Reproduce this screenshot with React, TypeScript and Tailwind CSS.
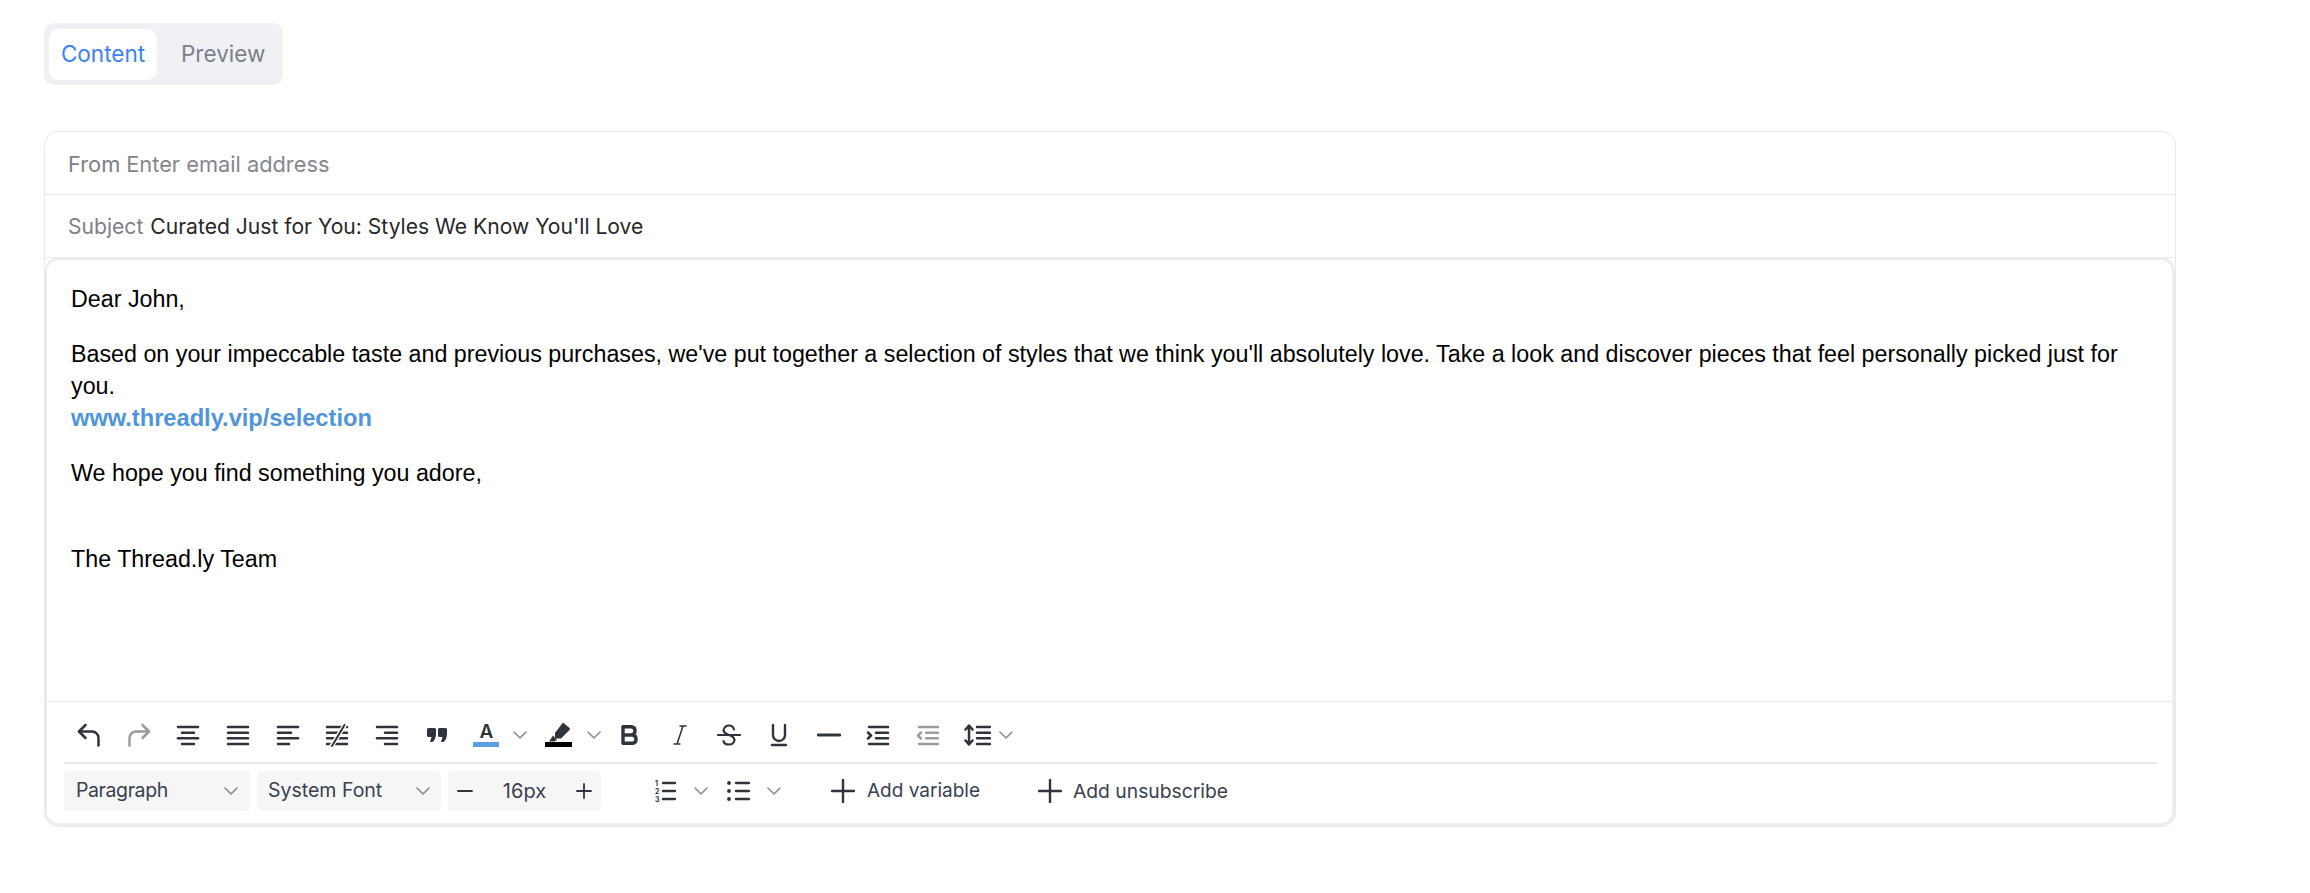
import React from 'react';

const sans = { fontFamily: 'Inter, sans-serif' };

const Icon: React.FC<{ children: React.ReactNode; className?: string; stroke?: number }> = ({ children, className, stroke }) => (
  <svg
    viewBox="0 0 24 24"
    fill="none"
    stroke="currentColor"
    strokeWidth={stroke || 2.5}
    strokeLinecap="round"
    strokeLinejoin="round"
    className={`w-[24px] h-[24px] ${className || ''}`}
  >
    {children}
  </svg>
);

const rowY = [4, 9.7, 15.3, 21];

const Lines: React.FC<{ rows: [number, number][] }> = ({ rows }) => (
  <Icon>
    {rows.map(([a, b], i) => (
      <path key={i} d={`M${a} ${rowY[i]}H${b}`} />
    ))}
  </Icon>
);

const Chevron: React.FC<{ className?: string }> = ({ className }) => (
  <div className={`flex items-center justify-center w-[18px] shrink-0 ${className || ''}`}>
    <svg viewBox="0 0 14 8" fill="none" stroke="#8b8d92" strokeWidth={1.6} strokeLinecap="round" strokeLinejoin="round" className="w-[14px] h-[8px]">
      <path d="M1 1 7 7 13 1" />
    </svg>
  </div>
);

const Btn: React.FC<{ children: React.ReactNode }> = ({ children }) => (
  <div className="flex items-center justify-center h-[34px] w-[49.7px] shrink-0">{children}</div>
);

const PlusIcon: React.FC = () => (
  <svg viewBox="0 0 24 24" fill="none" stroke="#2f343c" strokeWidth={2.4} strokeLinecap="round" className="w-[24px] h-[24px] shrink-0">
    <path d="M12 1V23M1 12H23" />
  </svg>
);

const App: React.FC = () => {
  return (
    <div className="w-[2310px] h-[893px] bg-white pt-[23px] pl-[44px]" style={sans}>
      {/* tabs */}
      <div className="flex items-center w-[239px] h-[62px] pl-[5px] rounded-[10px] bg-[#f0f1f5] text-[22.5px]">
        <div className="flex items-center justify-center w-[108px] h-[51px] rounded-[9px] bg-white text-[#3b82f6]">Content</div>
        <div className="pl-[24px] text-[#7d8088]">Preview</div>
      </div>

      <div className="mt-[46px] w-[2132px] h-[696px] rounded-[14px] border border-[#e8e8ea] bg-white flex flex-col">
        <div className="h-[63px] shrink-0 flex items-center gap-[6px] pl-[23px] pt-[2px] border-b border-[#e8e8ea] text-[21.8px]">
          <span className="text-[#7d8088]">From</span>
          <span className="text-[#85878e]">Enter email address</span>
        </div>
        <div className="h-[63px] shrink-0 flex items-center gap-[7px] pl-[23px] pt-[2px] border-b border-[#ececee] text-[21.1px]">
          <span className="text-[#7d8088]">Subject</span>
          <span className="text-[#27272a]">Curated Just for You: Styles We Know You'll Love</span>
        </div>

        {/* editor */}
        <div className="flex-1 flex flex-col min-h-0 rounded-[14px] border-[#ededee] -mt-[1px] border-t-[3px] border-l-[2px] border-b-[3px] border-r-[3px]">
          <div className="h-[441px] shrink-0 pt-[22.5px] pl-[24px] pr-[30px] text-[23.27px] leading-[32px] text-black" style={{ fontFamily: '"Liberation Sans", Arial, sans-serif' }}>
            <p>Dear John,</p>
            <p className="mt-[23px]">
              Based on your impeccable taste and previous purchases, we've put together a selection of styles that we think you'll absolutely love. Take a look and discover pieces that feel personally picked just for you.
            </p>
            <p className="font-bold text-[#4f95dc] text-[23.65px]">www.threadly.vip/selection</p>
            <p className="mt-[23px]">We hope you find something you adore,</p>
            <p className="mt-[54px]">The Thread.ly Team</p>
          </div>

          {/* toolbar */}
          <div className="border-t border-[#e8e8ea] pl-[18px] pr-[15px] flex-1">
            <div className="h-[62px] flex items-center pt-[5px] -ml-[1px] border-b-2 border-[#e9e9eb] text-[#2f343c]">
              <Btn>
                <Icon><path d="M8.500 2 2 8.500 8.500 15" /><path d="M2 8.500H15a6.500 6.500 0 0 1 6.500 6.500V22.500" /></Icon>
              </Btn>
              <Btn>
                <Icon className="text-[#9a9ca1]"><path d="M15.500 2 22 8.500 15.500 15" /><path d="M22 8.500H9a6.500 6.500 0 0 0-6.500 6.500V22.500" /></Icon>
              </Btn>
              <Btn><Lines rows={[[2, 22], [6, 18], [2, 22], [6, 18]]} /></Btn>
              <Btn><Lines rows={[[2, 22], [2, 22], [2, 22], [2, 22]]} /></Btn>
              <Btn><Lines rows={[[2, 22], [2, 15], [2, 22], [2, 13]]} /></Btn>
              <Btn>
                <Icon>
                  <path d="M2 4H22M2 9.700H22M2 15.300H22M2 21H22" />
                  <path d="M20 1.500 6.700 23" stroke="white" strokeWidth={4.500} />
                  <path d="M19.500 2 7 23" strokeWidth={2} />
                </Icon>
              </Btn>
              <Btn><Lines rows={[[2, 22], [10, 22], [2, 22], [10, 22]]} /></Btn>
              <Btn>
                <svg viewBox="0 0 20 14" fill="currentColor" className="w-[20px] h-[14px]">
                  <path d="M0 1.500Q0 0 1.500 0H7.500Q9 0 9 1.500V6Q9 11 5.500 14H3L4.500 9H1.500Q0 9 0 7.500ZM11 1.500Q11 0 12.500 0H18.500Q20 0 20 1.500V6Q20 11 16.500 14H14L15.500 9H12.500Q11 9 11 7.500Z" />
                </svg>
              </Btn>
              <Btn>
                <div className="flex flex-col items-center w-[26px]">
                  <span className="text-[19px] leading-[19px] font-semibold text-[#2f343c]">A</span>
                  <span className="w-[26px] h-[5px] mt-[1px] bg-[#5a9fe0]" />
                </div>
              </Btn>
              <Chevron />
              <div className="flex flex-col items-center w-[27px] ml-[16px] shrink-0">
                <svg viewBox="0 0 24 20" fill="currentColor" className="w-[24px] h-[20px]">
                  <path d="M16 .500 22.500 6Q23.500 7 22.500 8L14 16.500H8.500L8 16V11Z" />
                  <path d="M6 13.500 10 18 7 19.500H2Z" />
                </svg>
                <span className="w-[27px] h-[5px] bg-black" />
              </div>
              <Chevron className="ml-[13px]" />
              <div className="ml-[2px]" />
              <Btn>
                <svg viewBox="0 0 18 20" fill="none" stroke="currentColor" strokeWidth={3.400} strokeLinejoin="round" className="w-[18px] h-[20px]">
                  <path d="M2 1.700H10.500A4.200 4.200 0 0 1 10.500 10H2ZM2 10H11.500A4.200 4.200 0 0 1 11.500 18.300H2Z" />
                </svg>
              </Btn>
              <Btn>
                <svg viewBox="0 0 14 20" fill="none" stroke="currentColor" strokeWidth={1.500} strokeLinecap="round" className="w-[14px] h-[20px]">
                  <path d="M7 1H13M1 19H7M10 1 4 19" />
                </svg>
              </Btn>
              <Btn>
                <Icon stroke={2.2}><path d="M1 12H23" /><path d="M17 6.500Q16 2.500 12 2.500T6.500 7Q7 10.500 12 12T17.500 17Q17 21.500 12 21.500T6.500 18" /></Icon>
              </Btn>
              <Btn>
                <Icon stroke={2.4}><path d="M6 2V12A6 6 0 0 0 18 12V2" /><path d="M5 22H19" /></Icon>
              </Btn>
              <Btn>
                <Icon stroke={2.800}><path d="M1 12H23" /></Icon>
              </Btn>
              <Btn>
                <Icon><path d="M3 4H22M10 9.700H22M10 15.300H22M3 21H22" /><path d="M2 9.500 5 12.500 2 15.500" /></Icon>
              </Btn>
              <Btn>
                <Icon className="text-[#9a9ca1]"><path d="M3 4H22M10 9.700H22M10 15.300H22M3 21H22" /><path d="M5 9.500 2 12.500 5 15.500" /></Icon>
              </Btn>
              <Btn>
                <svg viewBox="0 0 27 24" fill="none" stroke="currentColor" strokeWidth={2.500} strokeLinecap="round" strokeLinejoin="round" className="w-[27px] h-[24px]">
                  <path d="M5 3V21M1.500 6.500 5 2.500 8.500 6.500M1.500 17.500 5 21.500 8.500 17.500" />
                  <path d="M13 4H26M13 9.700H26M13 15.300H26M13 21H26" />
                </svg>
              </Btn>
              <Chevron className="-ml-[6px]" />
            </div>

            <div className="h-[60px] flex items-start pt-[7px] -ml-[1px] text-[#374151]">
              <div className="flex items-center justify-between shrink-0 w-[186px] h-[40px] pl-[12px] pr-[10px] rounded-[5px] bg-[#f6f6f7] text-[19.5px] tracking-[-0.4px]">
                <span>Paragraph</span>
                <Chevron />
              </div>
              <div className="flex items-center justify-between shrink-0 w-[184px] h-[40px] ml-[7px] pl-[11px] pr-[9px] rounded-[5px] bg-[#f6f6f7] text-[19.5px]">
                <span>System Font</span>
                <Chevron />
              </div>
              <div className="flex items-center justify-between shrink-0 w-[153px] h-[40px] ml-[7px] px-[9px] rounded-[5px] bg-[#f6f6f7] text-[20px]">
                <svg viewBox="0 0 16 16" fill="none" stroke="#2f343c" strokeWidth={1.800} strokeLinecap="round" className="w-[16px] h-[16px]"><path d="M1 8H15" /></svg>
                <span>16px</span>
                <svg viewBox="0 0 16 16" fill="none" stroke="#2f343c" strokeWidth={1.800} strokeLinecap="round" className="w-[16px] h-[16px]"><path d="M1 8H15M8 1V15" /></svg>
              </div>
              <div className="flex items-center h-[40px]">
                <svg viewBox="0 0 22 24" fill="none" stroke="#2f343c" strokeWidth={2.400} strokeLinecap="round" className="w-[22px] h-[24px] ml-[53px]">
                  <path d="M9 4H21M9 12H21M9 20H21" />
                  <text x="1" y="7" fontSize="7" fill="#2f343c" stroke="none" fontWeight="700">1</text>
                  <text x="1" y="15" fontSize="7" fill="#2f343c" stroke="none" fontWeight="700">2</text>
                  <text x="1" y="23" fontSize="7" fill="#2f343c" stroke="none" fontWeight="700">3</text>
                </svg>
                <Chevron className="ml-[16px]" />
                <svg viewBox="0 0 23 24" fill="none" stroke="#2f343c" strokeWidth={2.400} strokeLinecap="round" className="w-[23px] h-[24px] ml-[17px]">
                  <path d="M9 4H22M9 12H22M9 20H22" />
                  <path d="M2 4h.01M2 12h.01M2 20h.01" strokeWidth={3.800} />
                </svg>
                <Chevron className="ml-[15px]" />
                <div className="ml-[48px]"><PlusIcon /></div>
                <span className="ml-[12px] text-[19px]">Add variable</span>
                <div className="ml-[58px]"><PlusIcon /></div>
                <span className="ml-[11px] text-[19.300px]">Add unsubscribe</span>
              </div>
            </div>
          </div>
        </div>
      </div>
    </div>
  );
};

export default App;
